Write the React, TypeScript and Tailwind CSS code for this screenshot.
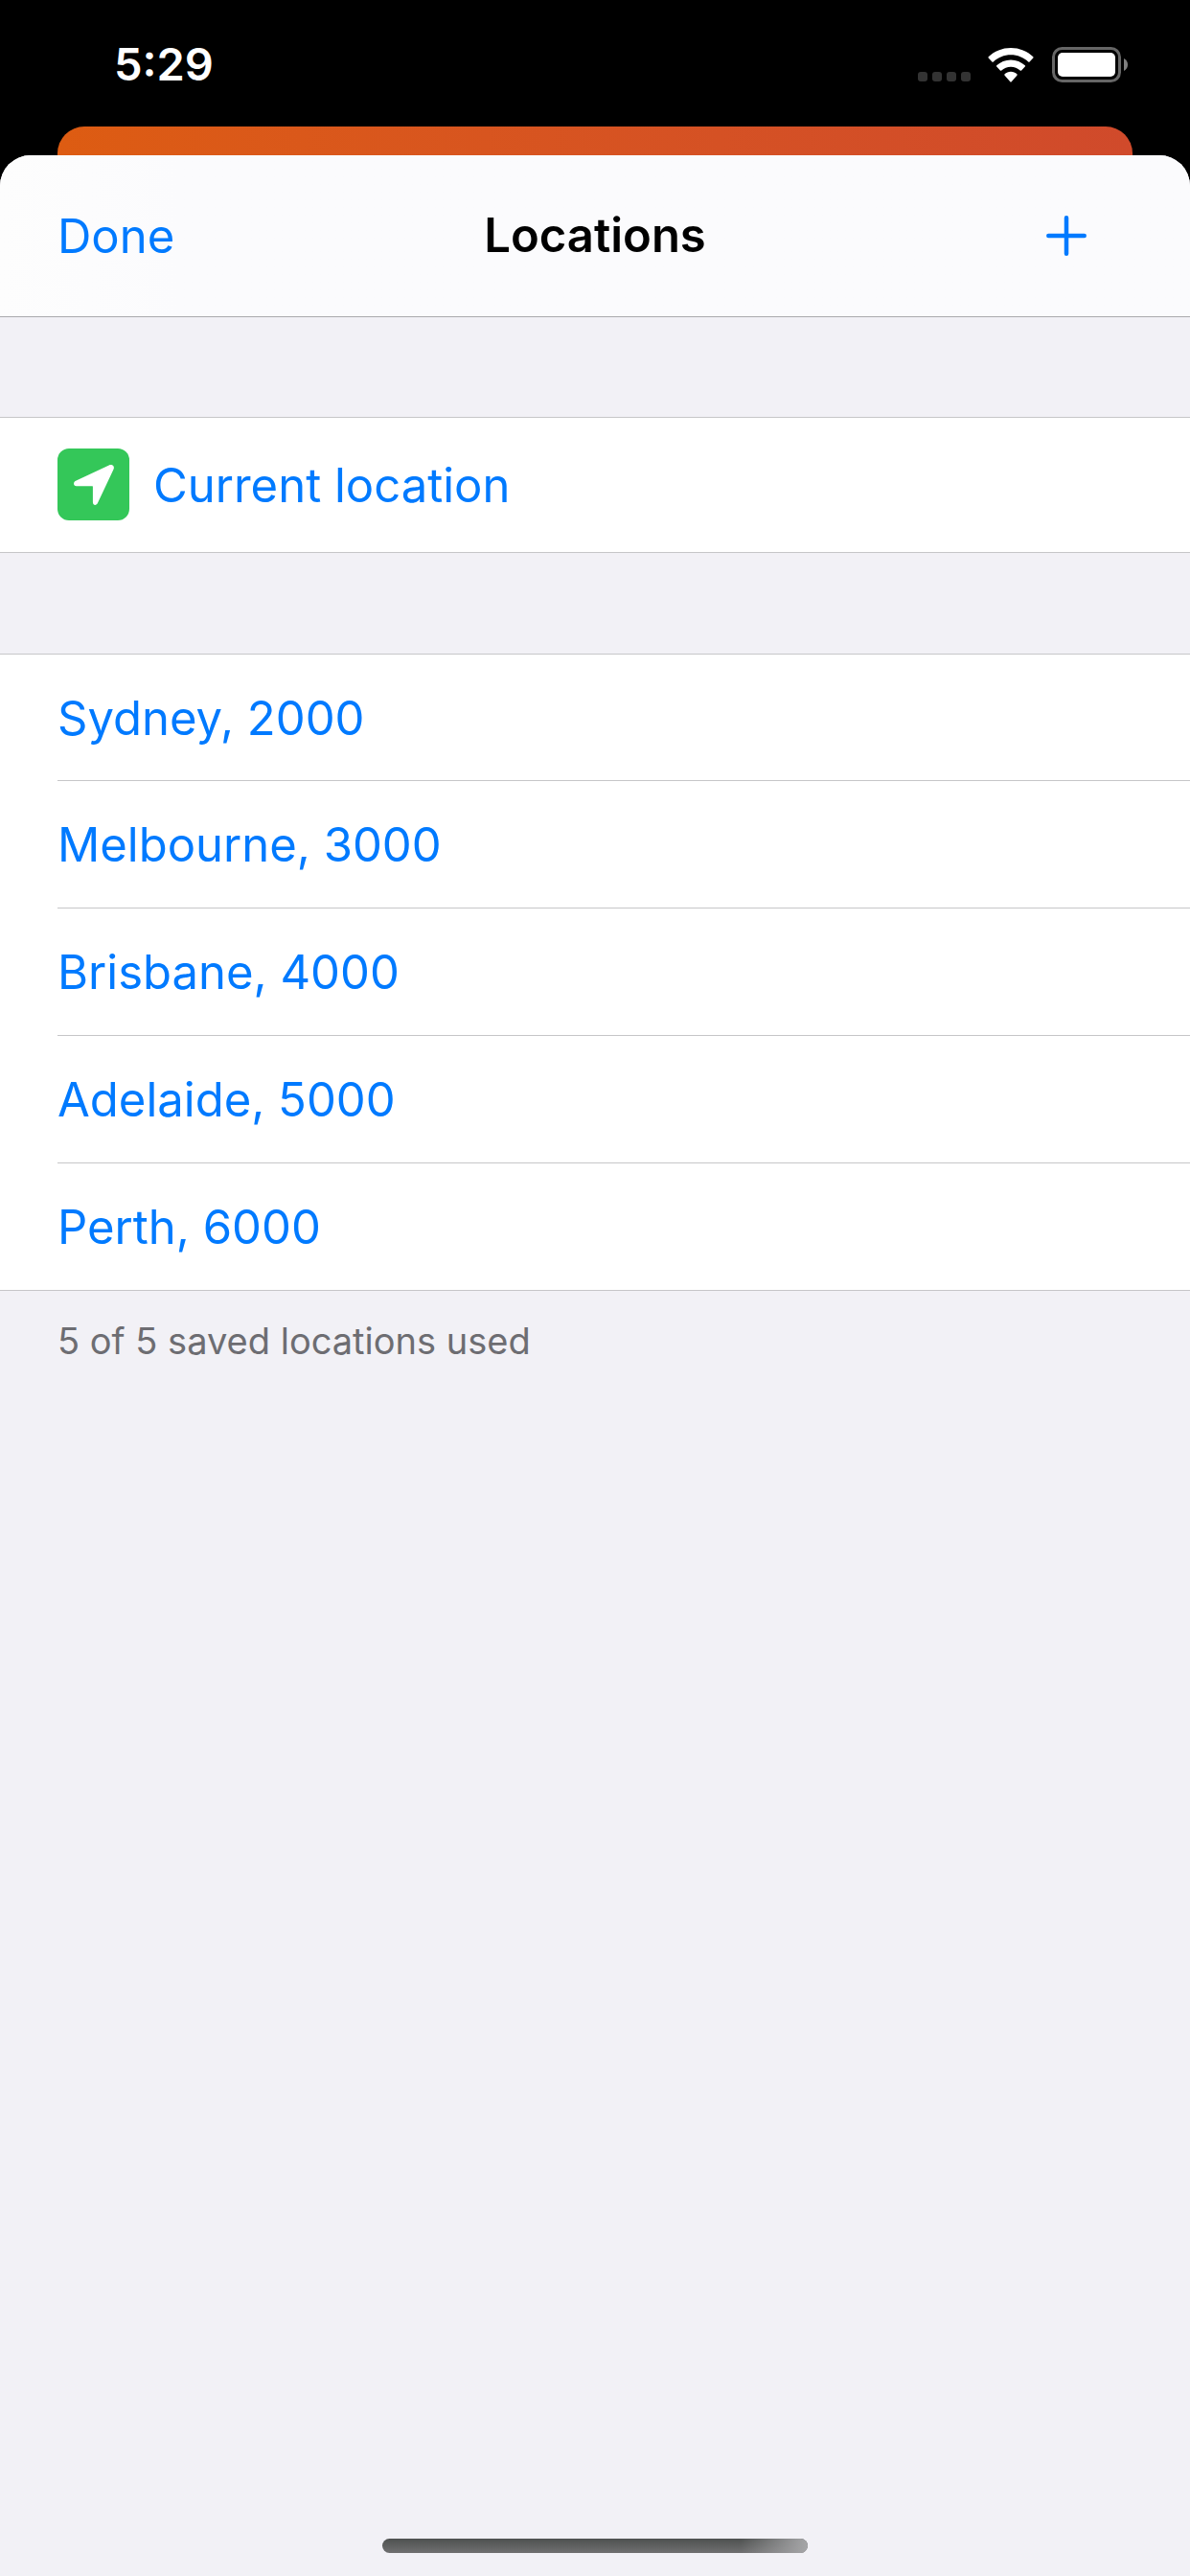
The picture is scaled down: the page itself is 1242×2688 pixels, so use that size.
const locations = [
  'Sydney, 2000',
  'Melbourne, 3000',
  'Brisbane, 4000',
  'Adelaide, 5000',
  'Perth, 6000',
];

function SignalDots() {
  return (
    <div className="flex gap-[5px] self-end pb-[1px]" aria-label="No signal">
      <span className="size-[10px] rounded-[3px] bg-[#333333]" />
      <span className="size-[10px] rounded-[3px] bg-[#333333]" />
      <span className="size-[10px] rounded-[3px] bg-[#333333]" />
      <span className="size-[10px] rounded-[3px] bg-[#333333]" />
    </div>
  );
}

function WifiIcon() {
  return (
    <svg width="48" height="36" viewBox="0 0 48 36" fill="#fff" aria-label="Wi-Fi">
      <path d="M24 0C33 0 41.200 3.400 47.300 9.200Q48 9.900 47.300 10.600L43.600 14.400Q42.900 15.100 42.200 14.400C37.400 10 31 7.300 24 7.300S10.600 10 5.800 14.400Q5.100 15.100 4.400 14.400L.7 10.600Q0 9.900.7 9.200C6.800 3.400 15 0 24 0Z" />
      <path d="M24 12.400C29.700 12.400 34.900 14.600 38.800 18.200Q39.500 18.900 38.800 19.600L35.100 23.400Q34.400 24.100 33.700 23.400C31.100 21.100 27.700 19.700 24 19.700S16.900 21.100 14.300 23.400Q13.600 24.100 12.900 23.400L9.200 19.600Q8.500 18.900 9.200 18.200C13.100 14.600 18.300 12.400 24 12.400Z" />
      <path d="M24 24.800C26.500 24.800 28.700 25.700 30.400 27.300Q31.100 28 30.400 28.700L24.700 35.300Q24 36 23.300 35.300L17.600 28.700Q16.900 28 17.600 27.300C19.300 25.700 21.500 24.800 24 24.800Z" />
    </svg>
  );
}

function BatteryIcon() {
  return (
    <svg width="79" height="37" viewBox="0 0 79 37" aria-label="Battery full">
      <rect x="1.500" y="1.500" width="69" height="34" rx="9" fill="none" stroke="#666" strokeWidth="3" />
      <rect x="6" y="6" width="60" height="25" rx="5" fill="#fff" />
      <path d="M75 12C77.700 13.300 79 15.700 79 18.500S77.700 23.700 75 25Z" fill="#808080" />
    </svg>
  );
}

function LocationArrow() {
  return (
    <svg width="42" height="42" viewBox="0 0 42 42" fill="#fff" aria-hidden="true">
      <path d="M37.300.3 2 16.800C-.9 18.200-.5 22.200 2.800 22.200H19.400Q19.900 22.200 19.900 22.700V39C19.900 42.400 23.600 43 25 39.800L41.500 4.800C42.900 1.800 40.400-1.100 37.300.3Z" />
    </svg>
  );
}

export default function App() {
  return (
    <div className="flex min-h-screen flex-col bg-black font-['Inter','Liberation_Sans',sans-serif]">
      <div className="flex h-[132px] items-center justify-between pt-[3px] pr-[65px] pl-[119px]">
        <time className="text-[47px] font-semibold text-white">5:29</time>
        <div className="flex h-[37px] items-center">
          <SignalDots />
          <div className="ml-[18px]">
            <WifiIcon />
          </div>
          <div className="ml-[19px]">
            <BatteryIcon />
          </div>
        </div>
      </div>
      <div className="mx-[60px] h-[30px] rounded-t-[28px] bg-linear-to-r from-[#dd5c12] to-[#d04a2b]" />

      <main className="flex grow flex-col overflow-hidden rounded-t-[32px] bg-[#f2f1f6]">
        <header className="grid h-[169px] grid-cols-3 items-center border-b border-[#a9a9ad] bg-linear-to-r from-[#fdfdfd] via-[#fbfbfd] via-15% to-[#fbfbfd] px-[60px]">
          <button className="justify-self-start pt-[2px] text-[49px] text-[#007aff]">Done</button>
          <h1 className="text-center text-[49px] font-semibold text-black">Locations</h1>
          <button className="mr-[48px] justify-self-end" aria-label="Add location">
            <svg width="42" height="42" viewBox="0 0 42 42" stroke="#007aff" strokeWidth="4.500" strokeLinecap="round">
              <path d="M21 2.300V39.700M2.300 21H39.700" />
            </svg>
          </button>
        </header>

        <section className="mt-[104px] border-y border-[#c6c6c8] bg-white">
          <button className="flex h-[140px] w-full items-center gap-[25px] px-[60px] pb-[1px] text-left text-[49px] text-[#007aff]">
            <span className="flex size-[75px] items-center justify-center rounded-[12px] bg-[#34c759]">
              <LocationArrow />
            </span>
            <span className="pt-[2px]">Current location</span>
          </button>
        </section>

        <ul className="mt-[105px] border-t border-b border-[#c6c6c8] bg-white pl-[60px]">
          {locations.map((name) => (
            <li key={name} className="h-[133px] border-b border-[#c6c6c8] first:h-[132px] last:h-[132px] last:border-b-0">
              <button className="h-full w-full pt-[2px] text-left text-[49px] text-[#007aff]">{name}</button>
            </li>
          ))}
        </ul>
        <p className="mt-[28px] px-[60px] text-[38px] leading-[48px] text-[#6d6d72]">5 of 5 saved locations used</p>

        <div className="mx-auto mt-auto mb-[24px] h-[15px] w-[444px] overflow-hidden rounded-full bg-linear-to-b from-[#4e5150] to-[#707071]">
          <div className="ml-auto h-full w-[70px] bg-linear-to-r from-transparent to-[#a6a6a8]" />
        </div>
      </main>
    </div>
  );
}
